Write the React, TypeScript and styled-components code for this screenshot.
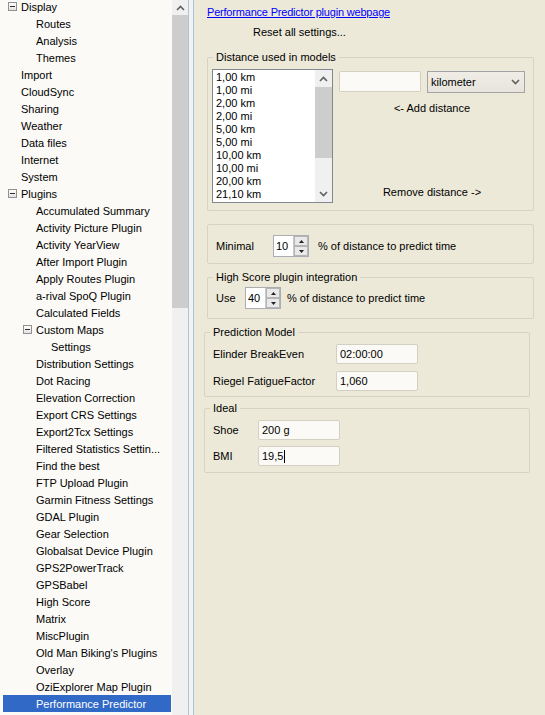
import React from 'react';
import styled, { createGlobalStyle } from 'styled-components';

const Global = createGlobalStyle`
  html, body { margin: 0; padding: 0; }
  body {
    font-family: "Liberation Sans", Arial, sans-serif;
    font-size: 11px;
    color: #000;
    background: #ece9d8;
    overflow: hidden;
  }
  * { box-sizing: border-box; }
`;

const Window = styled.div`
  display: flex;
  width: 545px;
  height: 715px;
  overflow: hidden;
`;

/* ---------- Tree ---------- */
const TreePanel = styled.div`
  display: flex;
  width: 188px;
  height: 100%;
  background: #fbfaf6;
  flex: none;
`;

const TreeList = styled.div`
  flex: 1;
  padding: 0 1px 0 3px;
  margin-top: -2px;
  overflow: hidden;
`;

const TreeRow = styled.div<{ $level: number; $selected?: boolean }>`
  display: flex;
  align-items: center;
  height: 17px;
  padding-left: ${(p) => 5 + p.$level * 15}px;
  background: ${(p) => (p.$selected ? '#3169c6' : 'transparent')};
  color: ${(p) => (p.$selected ? '#fff' : '#000')};
  white-space: nowrap;
`;

const ExpanderSlot = styled.span`
  width: 13px;
  flex: none;
  display: flex;
  align-items: center;
`;

const Expander = styled.span`
  width: 9px;
  height: 9px;
  border: 1px solid #919191;
  background: linear-gradient(#ffffff, #e2e2e2);
  display: flex;
  align-items: center;
  justify-content: center;
`;

const Minus = styled.span`
  width: 5px;
  height: 1px;
  background: #303030;
`;

const VScroll = styled.div<{ $w: number }>`
  width: ${(p) => p.$w}px;
  flex: none;
  display: flex;
  flex-direction: column;
  background: #f0f0f0;
`;

const ScrollArrow = styled.div<{ $h: number }>`
  height: ${(p) => p.$h}px;
  flex: none;
  display: flex;
  align-items: center;
  justify-content: center;
`;

const Thumb = styled.div<{ $h: number }>`
  height: ${(p) => p.$h}px;
  flex: none;
  background: #cdcdcd;
`;

const Track = styled.div`
  flex: 1;
`;

const Splitter = styled.div`
  width: 6px;
  flex: none;
  border-left: 1px solid #a9c4e6;
  border-right: 1px solid #a9c4e6;
  background: #f3f2ec;
`;

/* ---------- Right panel ---------- */
const Panel = styled.div`
  flex: 1;
  display: flex;
  flex-direction: column;
  padding-top: 5px;
  background: #ece9d8;
`;

const WebLink = styled.a`
  margin-left: 13px;
  align-self: flex-start;
  color: #0000ff;
  text-decoration: underline;
  line-height: 14px;
  letter-spacing: -0.2px;
`;

const ResetButton = styled.div`
  margin: 6px 0 0 59px;
  line-height: 14px;
  align-self: flex-start;
`;

const Group = styled.div<{ $ml: number; $mr: number; $mt: number }>`
  margin: ${(p) => p.$mt}px ${(p) => p.$mr}px 0 ${(p) => p.$ml}px;
  border: 1px solid #d6d3c6;
  border-radius: 2px;
`;

const GroupTitle = styled.div`
  margin: -8px 0 0 5px;
  padding: 0 3px;
  width: fit-content;
  background: #ece9d8;
  line-height: 14px;
`;

const DistanceBody = styled.div`
  display: flex;
  gap: 6px;
  padding: 5px 7px 7px 4px;
`;

const ListBox = styled.div`
  width: 121px;
  height: 134px;
  flex: none;
  border: 1px solid #828790;
  background: #fff;
  display: flex;
`;

const ListItems = styled.div`
  flex: 1;
  padding: 1px 0 0 3px;
  overflow: hidden;
`;

const ListItem = styled.div`
  line-height: 13px;
  height: 13px;
  white-space: nowrap;
`;

const RightColumn = styled.div`
  width: 186px;
  display: flex;
  flex-direction: column;
`;

const InputRow = styled.div`
  display: flex;
  gap: 6px;
  margin-top: 2px;
  align-items: flex-start;
`;

const TextField = styled.div<{ $w: number; $h: number }>`
  width: ${(p) => p.$w}px;
  height: ${(p) => p.$h}px;
  flex: none;
  border: 1px solid #d3d0c3;
  border-radius: 2px;
  background: #fbfaf6;
  padding-left: 3px;
  display: flex;
  align-items: center;
  white-space: nowrap;
`;

const Caret = styled.span`
  width: 1px;
  height: 13px;
  background: #000;
  margin-left: 1px;
`;

const Combo = styled.div`
  width: 98px;
  height: 22px;
  flex: none;
  border: 1px solid #a3a3a3;
  background: linear-gradient(#efede6, #e6e4dc);
  display: flex;
  align-items: center;
  justify-content: space-between;
  padding: 0 4px 0 3px;
`;

const ActionText = styled.div<{ $top?: boolean }>`
  text-align: center;
  line-height: 14px;
  margin-top: ${(p) => (p.$top ? '8px' : 'auto')};
  margin-bottom: ${(p) => (p.$top ? '0' : '4px')};
`;

const SpinRow = styled.div<{ $pt: number; $pb: number }>`
  display: flex;
  align-items: center;
  padding: ${(p) => p.$pt}px 0 ${(p) => p.$pb}px 8px;
`;

const SpinLabel = styled.div<{ $w: number }>`
  width: ${(p) => p.$w}px;
  flex: none;
`;

const Numeric = styled.div`
  width: 36px;
  height: 22px;
  flex: none;
  border: 1px solid #abadb3;
  background: #fff;
  display: flex;
  align-items: stretch;
`;

const NumericValue = styled.div`
  flex: 1;
  padding-left: 2px;
  display: flex;
  align-items: center;
`;

const SpinButtons = styled.div`
  width: 15px;
  display: flex;
  flex-direction: column;
  border-left: 1px solid #c9c9c9;
`;

const SpinButton = styled.div`
  flex: 1;
  display: flex;
  align-items: center;
  justify-content: center;
  background: #e9e9e9;
  border: 1px solid #b5b5b5;
`;

const SpinSuffix = styled.div<{ $gap: number }>`
  margin-left: ${(p) => p.$gap}px;
  white-space: nowrap;
`;

const FormBody = styled.div<{ $pb: number; $gap: number }>`
  display: flex;
  flex-direction: column;
  gap: ${(p) => p.$gap}px;
  padding: 5px 0 ${(p) => p.$pb}px 8px;
`;

const FormRow = styled.div`
  display: flex;
  align-items: center;
`;

const Chevron = ({ up }: { up?: boolean }) => (
  <svg width="9" height="6" viewBox="0 0 9 6">
    <polyline
      points={up ? '1,5 4.5,1.5 8,5' : '1,1 4.5,4.5 8,1'}
      fill="none"
      stroke="#606060"
      strokeWidth="1.6"
    />
  </svg>
);

const Tri = ({ up }: { up?: boolean }) => (
  <svg width="5" height="3" viewBox="0 0 5 3">
    <polygon points={up ? '0,3 2.5,0 5,3' : '0,0 5,0 2.5,3'} fill="#222" />
  </svg>
);

type Node = { t: string; l: number; exp?: boolean; sel?: boolean };

const tree: Node[] = [
  { t: 'Display', l: 0, exp: true },
  { t: 'Routes', l: 1 },
  { t: 'Analysis', l: 1 },
  { t: 'Themes', l: 1 },
  { t: 'Import', l: 0 },
  { t: 'CloudSync', l: 0 },
  { t: 'Sharing', l: 0 },
  { t: 'Weather', l: 0 },
  { t: 'Data files', l: 0 },
  { t: 'Internet', l: 0 },
  { t: 'System', l: 0 },
  { t: 'Plugins', l: 0, exp: true },
  { t: 'Accumulated Summary', l: 1 },
  { t: 'Activity Picture Plugin', l: 1 },
  { t: 'Activity YearView', l: 1 },
  { t: 'After Import Plugin', l: 1 },
  { t: 'Apply Routes Plugin', l: 1 },
  { t: 'a-rival SpoQ Plugin', l: 1 },
  { t: 'Calculated Fields', l: 1 },
  { t: 'Custom Maps', l: 1, exp: true },
  { t: 'Settings', l: 2 },
  { t: 'Distribution Settings', l: 1 },
  { t: 'Dot Racing', l: 1 },
  { t: 'Elevation Correction', l: 1 },
  { t: 'Export CRS Settings', l: 1 },
  { t: 'Export2Tcx Settings', l: 1 },
  { t: 'Filtered Statistics Settin...', l: 1 },
  { t: 'Find the best', l: 1 },
  { t: 'FTP Upload Plugin', l: 1 },
  { t: 'Garmin Fitness Settings', l: 1 },
  { t: 'GDAL Plugin', l: 1 },
  { t: 'Gear Selection', l: 1 },
  { t: 'Globalsat Device Plugin', l: 1 },
  { t: 'GPS2PowerTrack', l: 1 },
  { t: 'GPSBabel', l: 1 },
  { t: 'High Score', l: 1 },
  { t: 'Matrix', l: 1 },
  { t: 'MiscPlugin', l: 1 },
  { t: "Old Man Biking's Plugins", l: 1 },
  { t: 'Overlay', l: 1 },
  { t: 'OziExplorer Map Plugin', l: 1 },
  { t: 'Performance Predictor', l: 1, sel: true },
];

const distances = [
  '1,00 km', '1,00 mi', '2,00 km', '2,00 mi', '5,00 km', '5,00 mi',
  '10,00 km', '10,00 mi', '20,00 km', '21,10 km',
];

const NumericBox = ({ value }: { value: string }) => (
  <Numeric>
    <NumericValue>{value}</NumericValue>
    <SpinButtons>
      <SpinButton><Tri up /></SpinButton>
      <SpinButton><Tri /></SpinButton>
    </SpinButtons>
  </Numeric>
);

export default function App() {
  return (
    <Window>
      <Global />
      <TreePanel>
        <TreeList>
          {tree.map((n, i) => (
            <TreeRow key={i} $level={n.l} $selected={n.sel}>
              <ExpanderSlot>
                {n.exp && (
                  <Expander>
                    <Minus />
                  </Expander>
                )}
              </ExpanderSlot>
              {n.t}
            </TreeRow>
          ))}
        </TreeList>
        <VScroll $w={16}>
          <ScrollArrow $h={15}><Chevron up /></ScrollArrow>
          <Thumb $h={293} />
          <Track />
        </VScroll>
      </TreePanel>
      <Splitter />
      <Panel>
        <WebLink href="#">Performance Predictor plugin webpage</WebLink>
        <ResetButton>Reset all settings...</ResetButton>

        <Group $ml={13} $mr={11} $mt={18}>
          <GroupTitle>Distance used in models</GroupTitle>
          <DistanceBody>
            <ListBox>
              <ListItems>
                {distances.map((d) => (
                  <ListItem key={d}>{d}</ListItem>
                ))}
              </ListItems>
              <VScroll $w={17}>
                <ScrollArrow $h={17}><Chevron up /></ScrollArrow>
                <Thumb $h={71} />
                <Track />
                <ScrollArrow $h={17}><Chevron /></ScrollArrow>
              </VScroll>
            </ListBox>
            <RightColumn>
              <InputRow>
                <TextField $w={82} $h={21} />
                <Combo>
                  <span>kilometer</span>
                  <Chevron />
                </Combo>
              </InputRow>
              <ActionText $top>&lt;- Add distance</ActionText>
              <ActionText>Remove distance -&gt;</ActionText>
            </RightColumn>
          </DistanceBody>
        </Group>

        <Group $ml={13} $mr={11} $mt={13}>
          <SpinRow $pt={10} $pb={6}>
            <SpinLabel $w={57}>Minimal</SpinLabel>
            <NumericBox value="10" />
            <SpinSuffix $gap={9}>% of distance to predict time</SpinSuffix>
          </SpinRow>
        </Group>

        <Group $ml={13} $mr={11} $mt={13}>
          <GroupTitle>High Score plugin integration</GroupTitle>
          <SpinRow $pt={3} $pb={9}>
            <SpinLabel $w={29}>Use</SpinLabel>
            <NumericBox value="40" />
            <SpinSuffix $gap={6}>% of distance to predict time</SpinSuffix>
          </SpinRow>
        </Group>

        <Group $ml={10} $mr={15} $mt={13}>
          <GroupTitle>Prediction Model</GroupTitle>
          <FormBody $pb={5} $gap={7}>
            <FormRow>
              <SpinLabel $w={123}>Elinder BreakEven</SpinLabel>
              <TextField $w={82} $h={20}>02:00:00</TextField>
            </FormRow>
            <FormRow>
              <SpinLabel $w={123}>Riegel FatigueFactor</SpinLabel>
              <TextField $w={82} $h={20}>1,060</TextField>
            </FormRow>
          </FormBody>
        </Group>

        <Group $ml={10} $mr={15} $mt={11}>
          <GroupTitle>Ideal</GroupTitle>
          <FormBody $pb={6} $gap={6}>
            <FormRow>
              <SpinLabel $w={45}>Shoe</SpinLabel>
              <TextField $w={82} $h={20}>200 g</TextField>
            </FormRow>
            <FormRow>
              <SpinLabel $w={45}>BMI</SpinLabel>
              <TextField $w={82} $h={20}>
                19,5
                <Caret />
              </TextField>
            </FormRow>
          </FormBody>
        </Group>
      </Panel>
    </Window>
  );
}
